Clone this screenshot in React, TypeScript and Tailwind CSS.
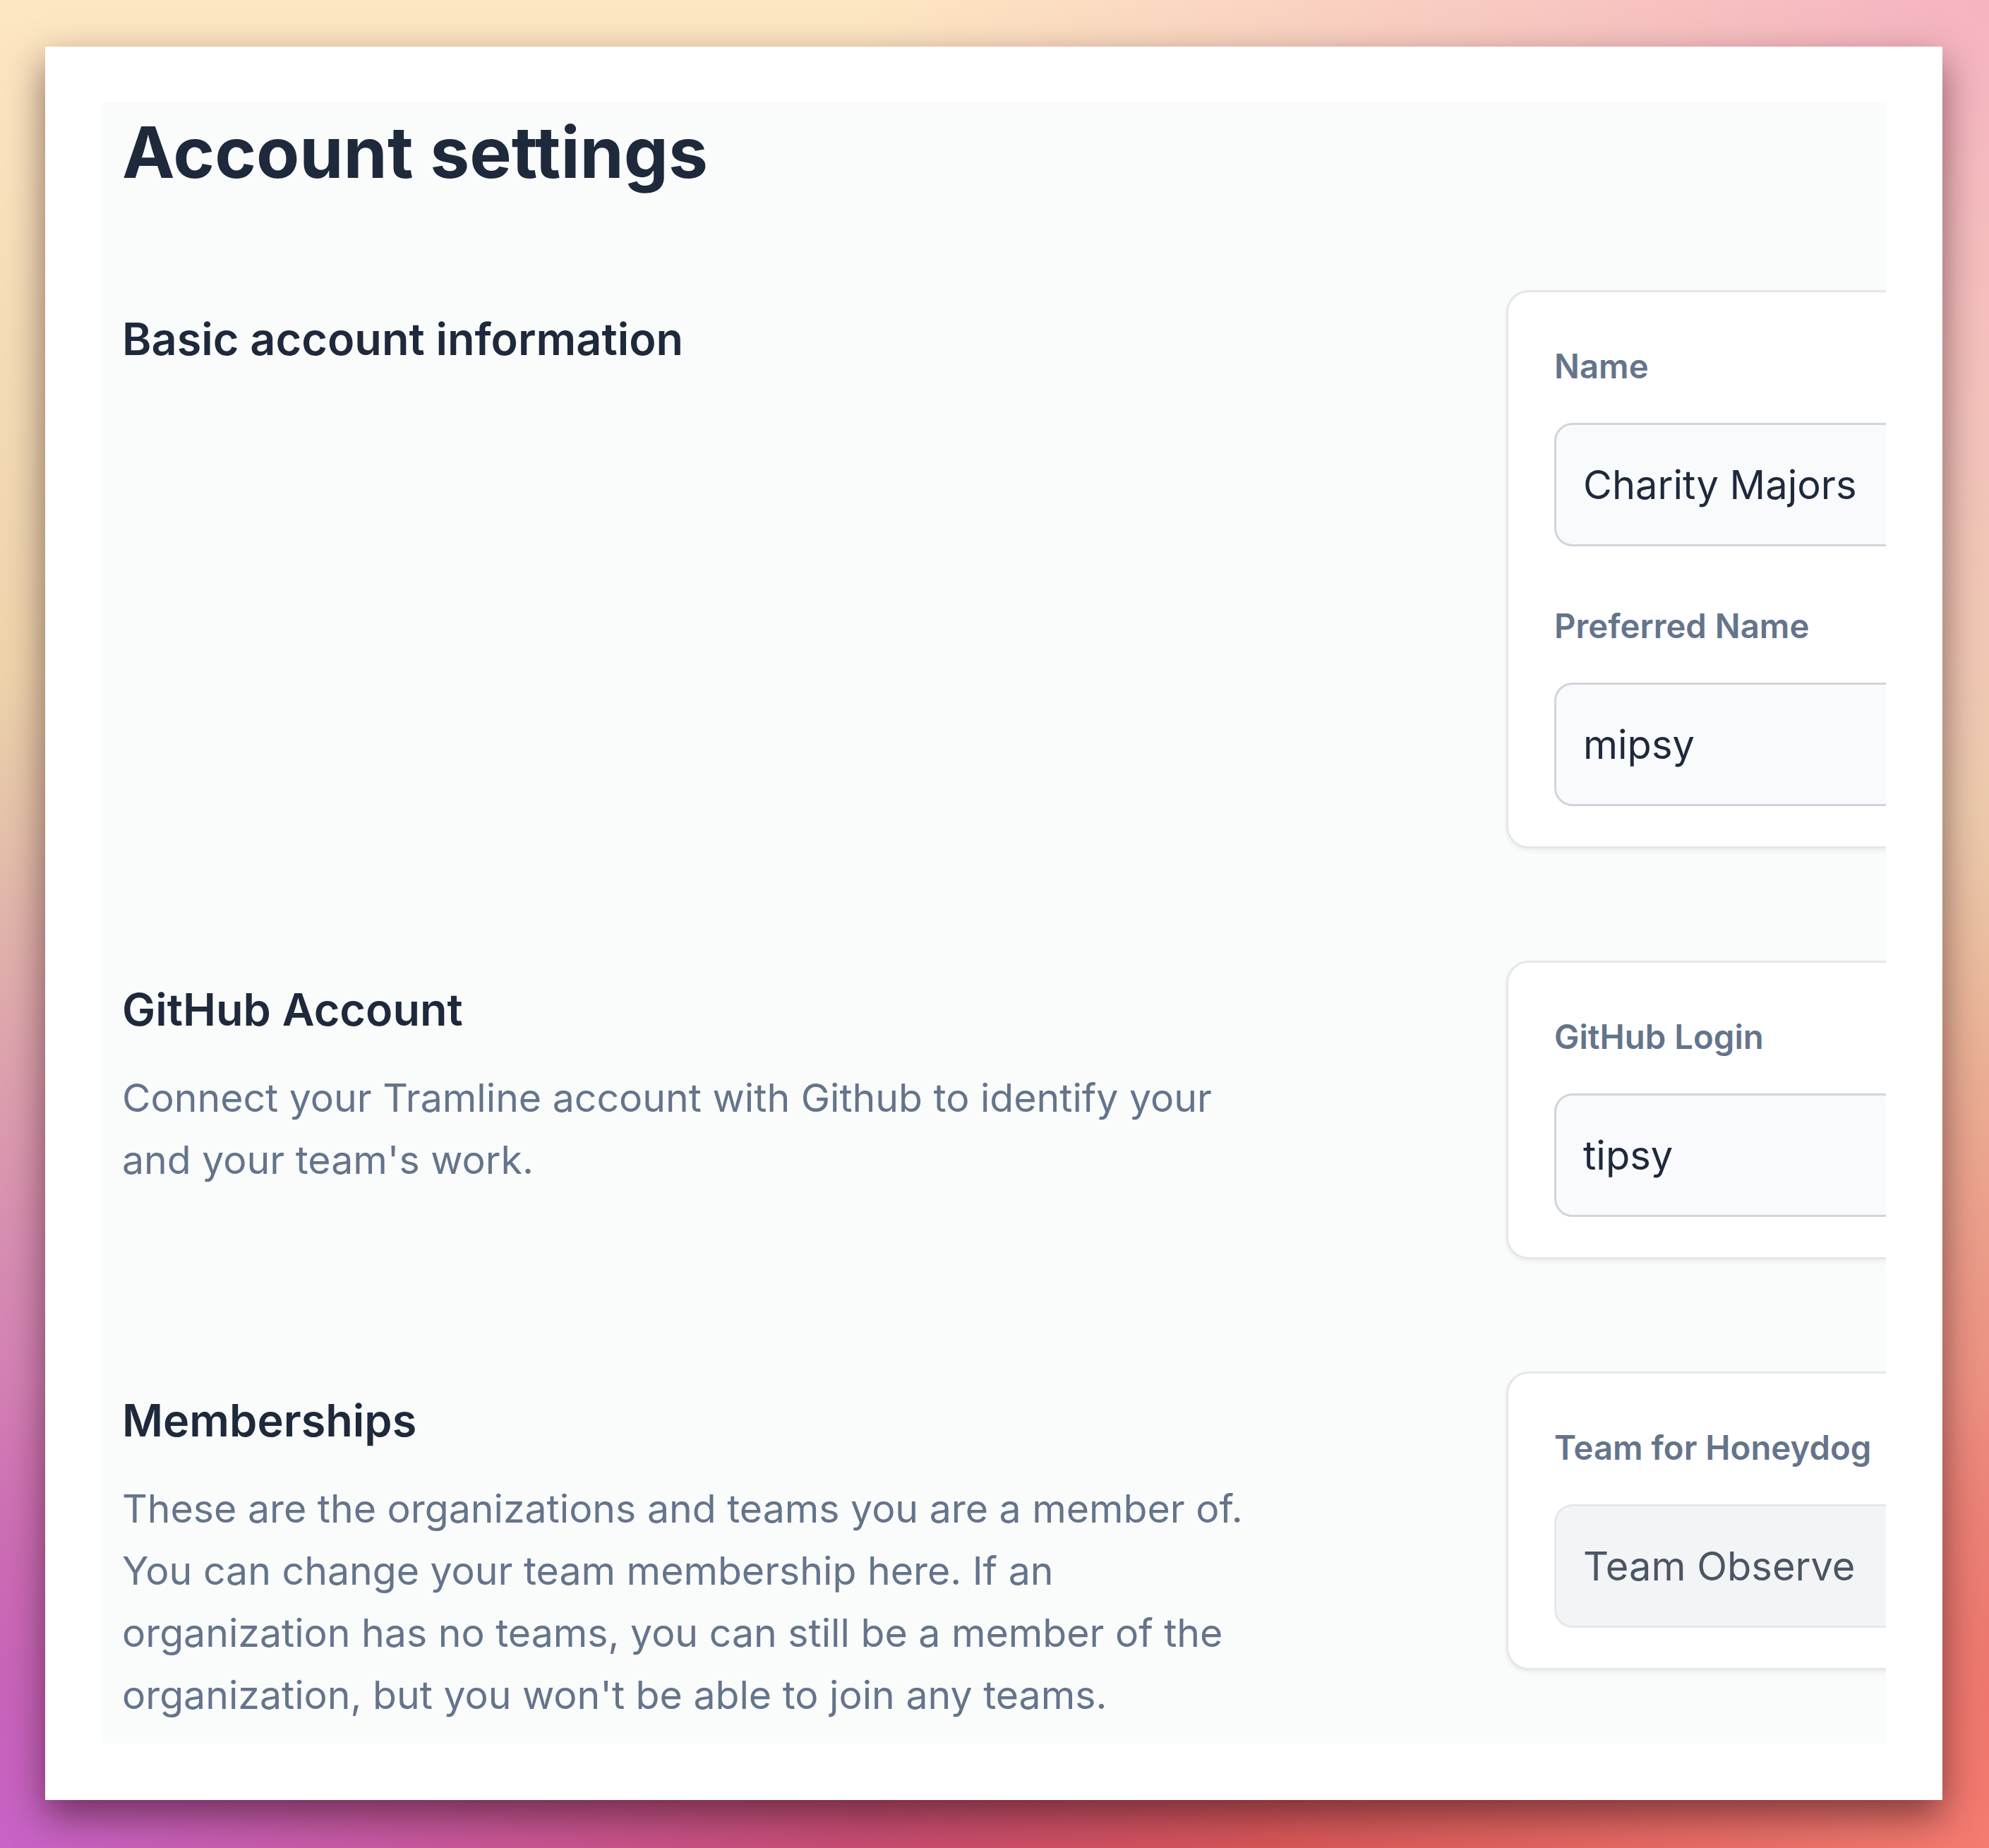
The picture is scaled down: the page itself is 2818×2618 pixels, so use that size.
import React from "react";

const FONT = "font-['Inter','Noto_Sans',sans-serif]";

type Field = { label: string; value: string; disabled?: boolean };

type Section = {
  title: string;
  description?: string;
  fields: Field[];
};

const SECTIONS: Section[] = [
  {
    title: "Basic account information",
    fields: [
      { label: "Name", value: "Charity Majors" },
      { label: "Preferred Name", value: "mipsy" },
    ],
  },
  {
    title: "GitHub Account",
    description: "Connect your Tramline account with Github to identify your and your team's work.",
    fields: [{ label: "GitHub Login", value: "tipsy" }],
  },
  {
    title: "Memberships",
    description:
      "These are the organizations and teams you are a member of. You can change your team membership here. If an organization has no teams, you can still be a member of the organization, but you won't be able to join any teams.",
    fields: [{ label: "Team for Honeydog", value: "Team Observe", disabled: true }],
  },
];

function FieldBox({ field, first }: { field: Field; first: boolean }) {
  return (
    <div className={first ? "" : "mt-[77px]"}>
      <label className="block text-[47.3px] leading-[72px] font-semibold text-[#64748b]">{field.label}</label>
      <div
        className={
          "mt-[44px] flex items-center h-[175px] w-full rounded-[26px] border-[3px] pl-[38px] text-[56px] leading-none " +
          (field.disabled
            ? "bg-[#f3f4f6] border-[#e5e7eb] text-[#4b5563]"
            : "bg-[#f8fafc] border-[#d1d5db] text-[#1e293b]")
        }
      >
        {field.value}
      </div>
    </div>
  );
}

function SettingsRow({ section }: { section: Section }) {
  return (
    <div className="flex items-start">
      <div className="w-[1961px] shrink-0 pt-[25px]">
        <h2 className="text-[63px] leading-[88px] font-semibold text-[#1e293b]">{section.title}</h2>
        {section.description && (
          <p className="mt-[37px] max-w-[1620px] text-[55.4px] leading-[88px] text-[#64748b]">{section.description}</p>
        )}
      </div>
      <div className="w-[1100px] shrink-0 rounded-[32px] border-[3px] border-[#e5e7eb] bg-white px-[65px] pt-[69px] pb-[57px] shadow-[0_3px_6px_rgba(15,23,42,0.06)]">
        {section.fields.map((f, i) => (
          <FieldBox key={f.label} field={f} first={i === 0} />
        ))}
      </div>
    </div>
  );
}

export default function App() {
  return (
    <div
      className={
        FONT +
        " w-[2818px] h-[2618px] overflow-hidden pt-[66px] pl-[64px] pr-[66px] pb-[68px] bg-[radial-gradient(ellipse_at_0%_100%,#c864c8_0%,rgba(200,100,200,0)_45%),radial-gradient(ellipse_at_100%_0%,#f5b3c0_0%,rgba(245,179,192,0)_40%),radial-gradient(ellipse_at_100%_100%,#f47c70_0%,rgba(244,124,112,0)_40%),linear-gradient(to_bottom,#fde6c2_0%,#ead0a6_45%,#e6ad9a_75%,#c8404a_100%)]"
      }
    >
      <div className="h-[2484px] bg-white p-[80px] shadow-[0_22px_50px_rgba(40,10,20,0.55)]">
        <div className="h-[2324px] overflow-hidden bg-[#fafbfb] pl-[29px] pt-[20px]">
          <h1 className="text-[100px] leading-none font-bold text-[#1e293b]">Account settings</h1>
          <div className="mt-[145px] flex flex-col gap-[159px]">
            {SECTIONS.map((s) => (
              <SettingsRow key={s.title} section={s} />
            ))}
          </div>
        </div>
      </div>
    </div>
  );
}
